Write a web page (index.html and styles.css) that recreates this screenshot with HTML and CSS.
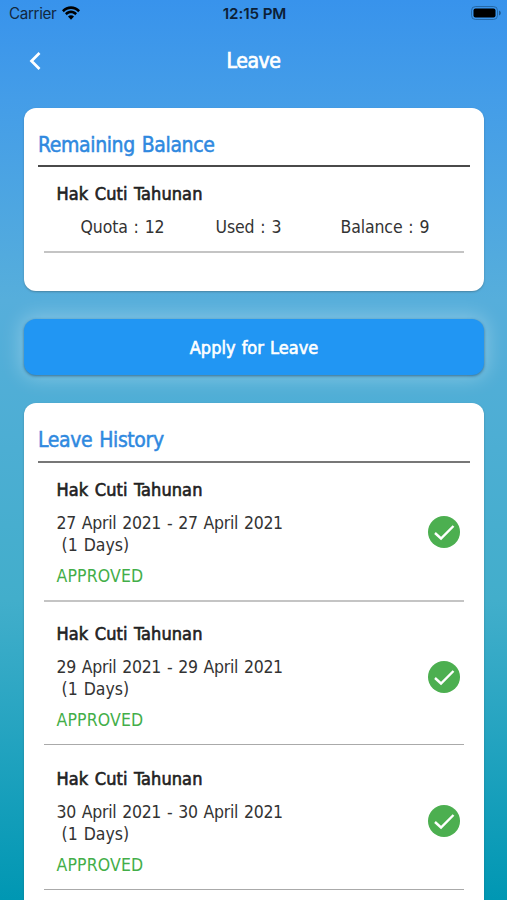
FILE: index.html
```html
<!DOCTYPE html>
<html lang="en">
<head>
<meta charset="utf-8">
<title>Leave</title>
<link rel="stylesheet" href="styles.css">
</head>
<body>
<div class="status">
  <div class="carrier"><span class="carrier-name">Carrier</span>
    <svg class="wifi" viewBox="0 0 18 14"><path d="M0 4.3C5-1.2 13-1.2 18 4.3L16.2 6.2C12.2 2 5.8 2 1.8 6.2Z"/><path d="M3 7.3C6.4 3.7 11.6 3.7 15 7.3L13.2 9.2C10.8 6.7 7.2 6.7 4.8 9.2Z"/><path d="M6 10.4C7.7 8.7 10.3 8.7 12 10.4L9 13.7Z"/></svg>
  </div>
  <div class="clock">12:15 PM</div>
  <svg class="battery" viewBox="0 0 31 14"><rect x=".5" y=".5" width="26" height="13" rx="4" fill="none" stroke="#1f5b91" stroke-opacity=".75"/><rect x="2.5" y="2.5" width="22" height="9" rx="2"/><path d="M28 4.5c2.4 1 2.4 4 0 5z" fill="#1f5b91"/></svg>
</div>
<header class="bar">
  <svg class="back" viewBox="0 0 12 20"><path d="M10.5 2L2.5 10L10.5 18"/></svg>
  <h1 class="page-title">Leave</h1>
</header>
<main class="content">
  <section class="card balance">
    <h2 class="heading">Remaining Balance</h2>
    <div class="balance-body">
      <h3 class="kind">Hak Cuti Tahunan</h3>
      <div class="stats"><span>Quota : 12</span><span>Used : 3</span><span>Balance : 9</span></div>
    </div>
  </section>
  <button class="apply">Apply for Leave</button>
  <section class="card history">
    <h2 class="heading">Leave History</h2>
    <article class="entry">
      <div class="info"><h3 class="kind">Hak Cuti Tahunan</h3><p class="dates">27 April 2021 - 27 April 2021</p><p class="days">(1 Days)</p><p class="state">APPROVED</p></div>
      <svg class="check" viewBox="0 0 32 32"><circle cx="16" cy="16" r="16"/><path d="M7 17L13 22.5L25.5 10"/></svg>
    </article>
    <article class="entry">
      <div class="info"><h3 class="kind">Hak Cuti Tahunan</h3><p class="dates">29 April 2021 - 29 April 2021</p><p class="days">(1 Days)</p><p class="state">APPROVED</p></div>
      <svg class="check" viewBox="0 0 32 32"><circle cx="16" cy="16" r="16"/><path d="M7 17L13 22.5L25.5 10"/></svg>
    </article>
    <article class="entry">
      <div class="info"><h3 class="kind">Hak Cuti Tahunan</h3><p class="dates">30 April 2021 - 30 April 2021</p><p class="days">(1 Days)</p><p class="state">APPROVED</p></div>
      <svg class="check" viewBox="0 0 32 32"><circle cx="16" cy="16" r="16"/><path d="M7 17L13 22.5L25.5 10"/></svg>
    </article>
  </section>
</main>
</body>
</html>
```
FILE: styles.css
```css
* { box-sizing: border-box; margin: 0; padding: 0; }
body {
  width: 507px; height: 900px; overflow: hidden;
  font-family: "DejaVu Sans Condensed", "DejaVu Sans", sans-serif;
  font-stretch: condensed;
  font-size: 17.5px; color: #333;
  background: linear-gradient(#3893ec 0, #449de8 100px, #56aedb 300px, #42aecb 600px, #0097b3 900px);
}
.status {
  height: 28px; padding: 0 7px 0 9px;
  display: grid; grid-template-columns: 1fr auto 1fr; align-items: center;
  font: 15.2px/28px Inter, sans-serif; color: #12283f;
}
.carrier { display: flex; align-items: center; gap: 6px; letter-spacing: -.35px; }
.wifi { width: 18px; height: 14px; fill: #000; margin-top: -2px; }
.clock { font-weight: 600; color: #0c2036; letter-spacing: -.1px; }
.battery { width: 31px; height: 14px; justify-self: end; margin-right: -2px; margin-top: -2px; }
.bar { height: 80px; padding: 0 29px; display: grid; grid-template-columns: 12px 1fr 12px; align-items: center; padding-bottom: 15px; }
.back { width: 12px; height: 20px; fill: none; stroke: #fff; stroke-width: 2.7; }
.page-title { font-size: 21px; font-weight: 400; color: #fff; text-align: center; letter-spacing: -.4px; -webkit-text-stroke: .7px #fff; }
.content { padding: 0 23px 0 24px; display: flex; flex-direction: column; gap: 28px; }
.card { background: #fff; border-radius: 12px; padding: 0 14px; box-shadow: 0 1px 2px rgba(50,70,80,.4); }
.balance { height: 183px; }
.history { height: 520px; }
.heading {
  height: 59px; padding-top: 23px; border-bottom: 2px solid #4a4a4a;
  font-size: 21px; line-height: 28px; font-weight: 400; color: #2f89df;
  letter-spacing: -.38px; word-spacing: 1.3px; -webkit-text-stroke: .5px #2f89df;
}
.history .heading { height: 60px; border-color: #777; }
.kind { font-size: 18px; line-height: 24px; font-weight: 400; color: #222; letter-spacing: .1px; word-spacing: 1.2px; -webkit-text-stroke: .6px #222; }
.balance-body { margin: 0 6px; padding: 15px 12px 0 12.5px; height: 86px; border-bottom: 2px solid #c4c4c4; }
.stats { display: grid; grid-template-columns: 135px 125px 1fr; padding-left: 24px; margin-top: 10px; line-height: 22px; letter-spacing: -.12px; word-spacing: 1px; }
.apply {
  height: 56px; border: 0; border-radius: 12px; background: #2196f3; color: #fff;
  font: inherit; font-size: 18px; letter-spacing: 0; word-spacing: 1px; -webkit-text-stroke: .6px #fff;
  box-shadow: 0 1px 3px rgba(20,60,90,.6), 0 0 20px 3px rgba(255,255,255,.3);
}
.entry { margin: 0 6px; padding: 0 4px 0 12.5px; height: 143px; display: flex; justify-content: space-between; border-bottom: 1px solid #aaa; }
.history .heading + .entry { height: 139px; border-bottom: 2px solid #c4c4c4; }
.info { padding-top: 20px; line-height: 22px; }
.heading + .entry .info { padding-top: 15px; }
.entry:last-child { height: 145px; }
.entry:last-child .info { padding-top: 22px; }
.dates { margin-top: 10px; letter-spacing: -.3px; word-spacing: 1.2px; }
.days { padding-left: 5px; letter-spacing: 0; word-spacing: 1px; }
.state { margin-top: 9px; color: #43ae49; letter-spacing: .15px; }
.check { width: 32px; height: 32px; margin-top: 58.5px; }
.heading + .entry .check { margin-top: 53px; }
.entry:last-child .check { margin-top: 60px; }
.check circle { fill: #4caf50; }
.check path { fill: none; stroke: #fff; stroke-width: 2.4; }
```
